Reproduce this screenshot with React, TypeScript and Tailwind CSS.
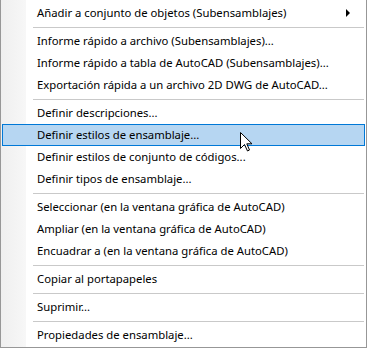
import React from "react";

type Entry = { label: string; sub?: boolean; active?: boolean } | "sep";

const entries: Entry[] = [
  { label: "Añadir a conjunto de objetos (Subensamblajes)", sub: true },
  "sep",
  { label: "Informe rápido a archivo (Subensamblajes)..." },
  { label: "Informe rápido a tabla de AutoCAD (Subensamblajes)..." },
  { label: "Exportación rápida a un archivo 2D DWG de AutoCAD..." },
  "sep",
  { label: "Definir descripciones..." },
  { label: "Definir estilos de ensamblaje...", active: true },
  { label: "Definir estilos de conjunto de códigos..." },
  { label: "Definir tipos de ensamblaje..." },
  "sep",
  { label: "Seleccionar (en la ventana gráfica de AutoCAD)" },
  { label: "Ampliar (en la ventana gráfica de AutoCAD)" },
  { label: "Encuadrar a (en la ventana gráfica de AutoCAD)" },
  "sep",
  { label: "Copiar al portapapeles" },
  "sep",
  { label: "Suprimir..." },
  "sep",
  { label: "Propiedades de ensamblaje..." },
];

function Cursor() {
  return (
    <svg
      className="absolute left-[240px] top-[132px]"
      width="13"
      height="20"
      viewBox="0 0 13 20"
    >
      <path
        d="M0.5 0.5 L0.5 16.5 L4.5 12.5 L7.5 19 L9.5 18 L6.8 11.8 L12 11.8 Z"
        fill="#fff"
        stroke="#000"
        strokeWidth="1"
      />
    </svg>
  );
}

export default function App() {
  return (
    <div
      className="relative h-[348px] w-[367px] overflow-hidden bg-white text-[11.3px] text-black"
      style={{ fontFamily: '"Noto Sans", "Open Sans", sans-serif' }}
    >
      <div className="flex h-full border-x border-b border-[#979797]">
        <div className="w-[25px] shrink-0 bg-gradient-to-r from-[#efefef] to-[#f7f7f7]" />
        <div className="flex-1" />
      </div>

      <div className="absolute inset-x-[1px] top-[2px] flex flex-col">
        {entries.map((e, i) =>
          e === "sep" ? (
            <div key={i} className="flex h-[6px] items-center pl-[32px] pr-[2px]">
              <div className="h-px flex-1 bg-[#c9c9c9]" />
            </div>
          ) : (
            <div
              key={i}
              className={
                e.active
                  ? "mx-[1px] flex h-[22px] items-center border border-[#0078d7] bg-[#b6d6f2] pl-[34px] pr-3"
                  : "mx-[1px] flex h-[22px] items-center border border-transparent pl-[34px] pr-3"
              }
            >
              <span className="flex-1 whitespace-nowrap leading-none">{e.label}</span>
              {e.sub && (
                <svg width="5" height="8" viewBox="0 0 5 8" className="mr-[1px]">
                  <path d="M0 0 L4 4 L0 8 Z" fill="#000" />
                </svg>
              )}
            </div>
          )
        )}
      </div>
      <Cursor />
    </div>
  );
}
